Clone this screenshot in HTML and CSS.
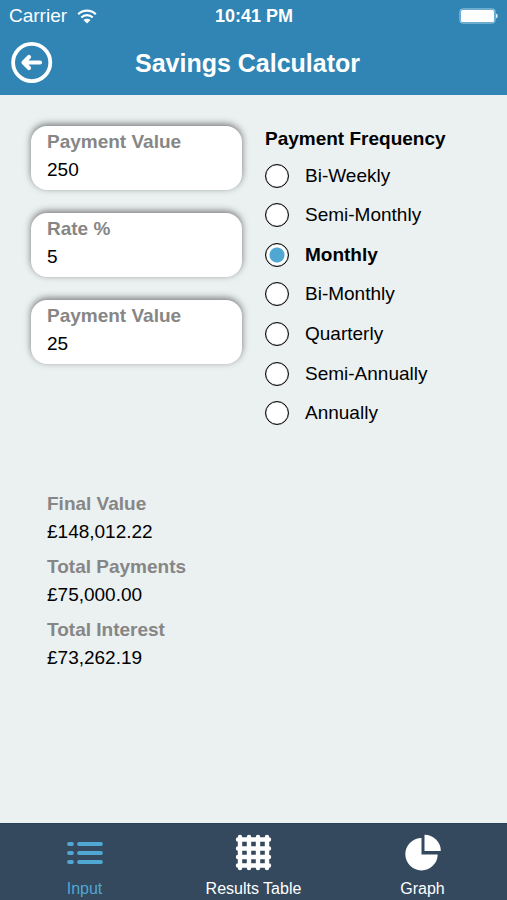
FILE: index.html
```html
<!DOCTYPE html>
<html lang="en">
<head>
  <meta charset="utf-8">
  <meta name="viewport" content="width=device-width, initial-scale=1">
  <title>Savings Calculator</title>
  <link rel="stylesheet" href="styles.css">
</head>
<body>
  <header class="header">
    <div class="status">
      <div class="carrier">
        <span>Carrier</span>
        <svg class="wifi" viewBox="0 0 20 15" width="20" height="15" aria-hidden="true">
          <path d="M1.2 5.2a12.6 12.6 0 0 1 17.6 0M4.3 8.5a8.2 8.2 0 0 1 11.4 0" fill="none" stroke="currentColor" stroke-width="2.2"/>
          <path d="M10 14.6 6.5 11.1a5 5 0 0 1 7 0z" fill="currentColor"/>
        </svg>
      </div>
      <span class="time">10:41 PM</span>
      <svg class="battery" viewBox="0 0 40 16" width="40" height="16" aria-hidden="true">
        <rect x="1" y="1" width="35" height="14" rx="2.5" fill="none" stroke="#a9d3ea" stroke-width="1"/>
        <rect x="2" y="2" width="33" height="12" rx="1.5" fill="#fff"/>
        <path d="M37 5.5a2.6 2.6 0 0 1 0 5z" fill="#d5ebf6"/>
      </svg>
    </div>
    <div class="titlebar">
      <button class="back" type="button" aria-label="Back">
        <svg viewBox="0 0 42 42" width="42" height="42" aria-hidden="true">
          <circle cx="20.700" cy="20.500" r="18.600" fill="none" stroke="currentColor" stroke-width="3.800"/>
          <path d="M29 20.500H13.500M18 15 12.500 20.500l5.500 5.500" fill="none" stroke="currentColor" stroke-width="4.200" stroke-linecap="round" stroke-linejoin="round"/>
        </svg>
      </button>
      <h1 class="title">Savings Calculator</h1>
    </div>
  </header>

  <main class="main">
    <form class="form">
      <div class="fields">
        <div class="card">
          <label class="caption" for="payment">Payment Value</label>
          <input class="value" id="payment" type="text" inputmode="decimal" value="250">
        </div>
        <div class="card">
          <label class="caption" for="rate">Rate %</label>
          <input class="value" id="rate" type="text" inputmode="decimal" value="5">
        </div>
        <div class="card">
          <label class="caption" for="term">Payment Value</label>
          <input class="value" id="term" type="text" inputmode="decimal" value="25">
        </div>
      </div>
      <fieldset class="frequency">
        <legend class="legend">Payment Frequency</legend>
        <div class="options">
          <label class="option"><input class="radio" type="radio" name="frequency"><span>Bi-Weekly</span></label>
          <label class="option"><input class="radio" type="radio" name="frequency"><span>Semi-Monthly</span></label>
          <label class="option"><input class="radio" type="radio" name="frequency" checked><span>Monthly</span></label>
          <label class="option"><input class="radio" type="radio" name="frequency"><span>Bi-Monthly</span></label>
          <label class="option"><input class="radio" type="radio" name="frequency"><span>Quarterly</span></label>
          <label class="option"><input class="radio" type="radio" name="frequency"><span>Semi-Annually</span></label>
          <label class="option"><input class="radio" type="radio" name="frequency"><span>Annually</span></label>
        </div>
      </fieldset>
    </form>

    <dl class="results">
      <div class="result"><dt class="caption">Final Value</dt><dd class="value">£148,012.22</dd></div>
      <div class="result"><dt class="caption">Total Payments</dt><dd class="value">£75,000.00</dd></div>
      <div class="result"><dt class="caption">Total Interest</dt><dd class="value">£73,262.19</dd></div>
    </dl>
  </main>

  <nav class="tabs">
    <a class="tab active" href="#input" aria-current="page">
      <svg viewBox="0 0 38 38" width="38" height="38" aria-hidden="true">
        <path d="M3 10h3M3 19h3M3 28h3M13 10h22M13 19h22M13 28h22" fill="none" stroke="currentColor" stroke-width="3.800" stroke-linecap="round"/>
      </svg>
      <span>Input</span>
    </a>
    <a class="tab" href="#results">
      <svg viewBox="0 0 38 38" width="38" height="38" aria-hidden="true">
        <path d="M5 3v31M14 3v31M23 3v31M32 3v31M3 5.500h31M3 14.500h31M3 23h31M3 31.500h31" fill="none" stroke="currentColor" stroke-width="4.400" stroke-linecap="round"/>
      </svg>
      <span>Results Table</span>
    </a>
    <a class="tab" href="#graph">
      <svg viewBox="0 0 38 38" width="38" height="38" aria-hidden="true">
        <path d="M17.500 4A16.200 16.200 0 1 0 33.700 20.500H17.500z" fill="currentColor"/>
        <path d="M20.500 .7A16.300 16.300 0 0 1 36.800 17H20.500z" fill="currentColor"/>
      </svg>
      <span>Graph</span>
    </a>
  </nav>
</body>
</html>
```
FILE: styles.css
```css
* {
  box-sizing: border-box;
}

body {
  display: flex;
  flex-direction: column;
  min-height: 100vh;
  margin: 0;
  background: #ebf0f1;
  color: #000;
  font-family: "Liberation Sans", Arial, sans-serif;
  font-size: 19px;
  line-height: 28px;
}

.header {
  padding-bottom: 11px;
  background: #3085b5;
  color: #fff;
}

.status {
  display: grid;
  grid-template-columns: 1fr auto 1fr;
  align-items: center;
  height: 32px;
  padding: 0 8px 0 9px;
}

.carrier {
  display: flex;
  align-items: center;
  gap: 10px;
}

.time {
  font-size: 18px;
  font-weight: bold;
}

.battery {
  justify-self: end;
}

.titlebar {
  display: grid;
  grid-template-columns: 42px 1fr 42px;
  align-items: center;
  height: 52px;
  padding: 10px 11px 0;
}

.back {
  height: 42px;
  padding: 0;
  border: 0;
  background: none;
  color: inherit;
}

.back svg {
  display: block;
}

.title {
  margin: 0;
  padding-right: 12px;
  font-size: 25px;
  text-align: center;
}

.main {
  flex: 1;
  padding: 31px 31px 30px;
}

.form {
  display: grid;
  grid-template-columns: 1fr 1fr;
  gap: 23px;
}

.fields {
  display: flex;
  flex-direction: column;
  gap: 23px;
}

.card {
  display: flex;
  flex-direction: column;
  height: 64px;
  padding: 2px 16px;
  border-radius: 16px;
  background: #fff;
  box-shadow: 0 -2px 7px rgba(0, 0, 0, 0.5);
}

.caption {
  color: #868686;
  font-weight: bold;
}

.value {
  width: 100%;
  height: 28px;
  margin: 0;
  padding: 0;
  border: 0;
  background: none;
  color: #000;
  font: inherit;
}

.frequency {
  min-width: 0;
  margin: 0;
  padding: 0;
  border: 0;
}

.legend {
  padding: 0;
  line-height: 26px;
  font-weight: bold;
}

.options {
  display: grid;
  grid-template-rows: repeat(7, 1fr);
  height: 281px;
  padding-top: 4px;
}

.option {
  display: flex;
  align-items: center;
  gap: 16px;
}

.radio {
  flex: none;
  width: 24px;
  height: 24px;
  margin: 0;
  border: 1px solid #000;
  border-radius: 50%;
  background: #fff;
  box-shadow: inset 0 0 1px #000;
  appearance: none;
}

.radio:checked {
  background: radial-gradient(circle, #50a7d2 7px, #fff 8px);
}

.radio:checked + span {
  font-weight: bold;
}

.results {
  display: flex;
  flex-direction: column;
  gap: 7px;
  margin: 57px 16px 0;
}

.tabs {
  display: grid;
  grid-template-columns: repeat(3, 1fr);
  height: 77px;
  padding-top: 10px;
  border-top: 1px solid #2d4257;
  background: #34495e;
}

.tab {
  display: flex;
  flex-direction: column;
  align-items: center;
  gap: 7px;
  color: #fff;
  font-size: 16px;
  line-height: 20px;
  text-decoration: none;
}

.tab.active {
  color: #50a7d2;
}
```
